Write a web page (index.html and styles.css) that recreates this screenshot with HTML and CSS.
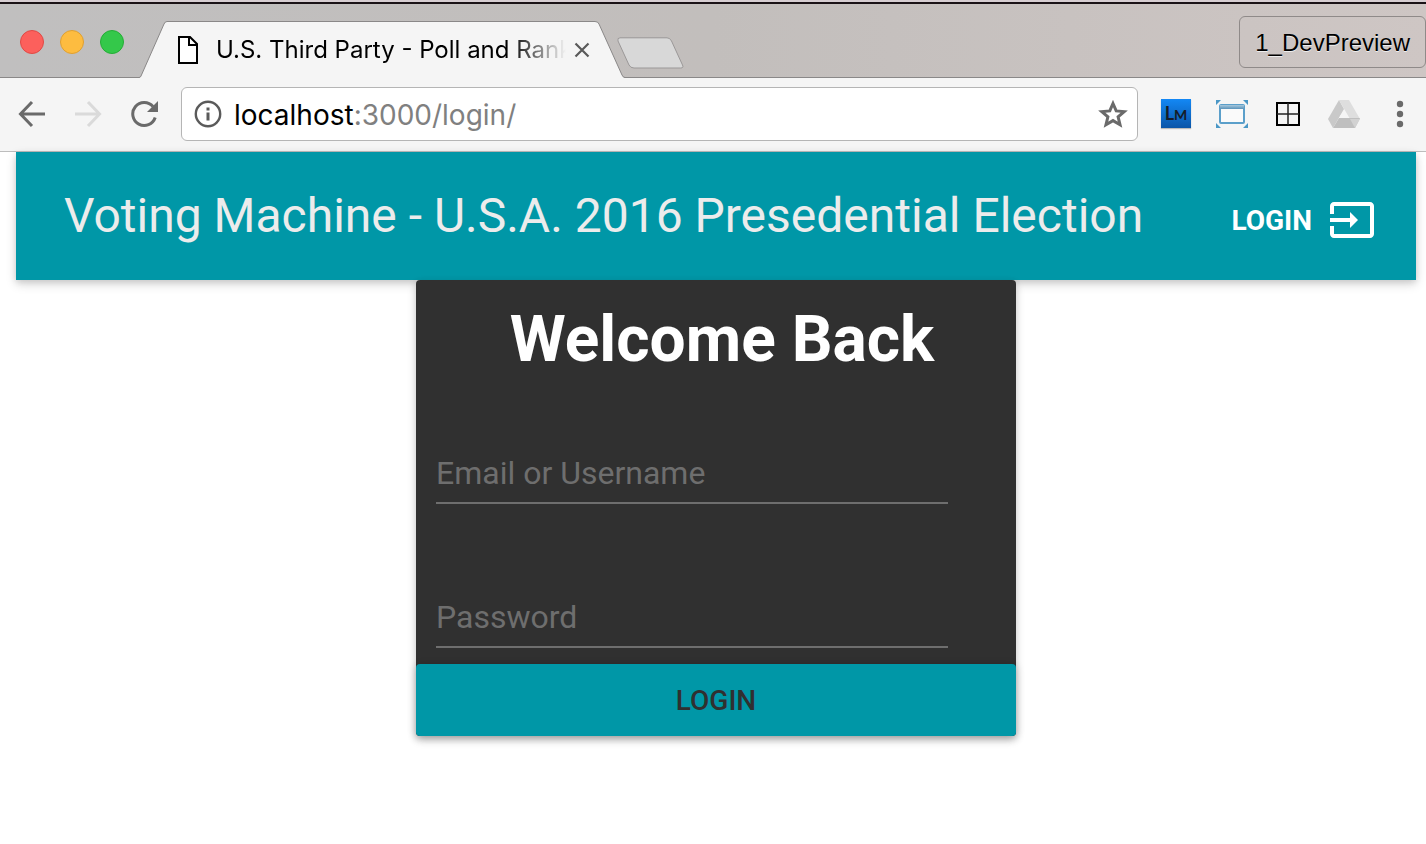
FILE: index.html
```html
<!DOCTYPE html>
<html lang="en">
<head>
<meta charset="utf-8">
<title>U.S. Third Party - Poll and Rank</title>
<link rel="stylesheet" href="styles.css">
</head>
<body>
<div class="browser">
  <div class="tab-strip">
    <div class="window-controls">
      <button class="light light-close" aria-label="Close window"></button>
      <button class="light light-min" aria-label="Minimize window"></button>
      <button class="light light-max" aria-label="Zoom window"></button>
    </div>
    <div class="tab">
      <svg class="tab-shape" width="486" height="57" viewBox="0 0 486 57" aria-hidden="true">
        <path d="M0 57 C1 56 1.500 56 2 55 L25 3 Q26 .5 28 .5 H456 Q459 .5 460 3 L483 54 Q484 56.500 486 57 Z" fill="#f5f5f5"/>
        <path d="M0 56.500 Q1.500 56.500 2 55 L25 3 Q26 .5 28 .5 H456 Q459 .5 460 3 L483 54 Q484 56.500 486 56.500" fill="none" stroke="#8a8888"/>
      </svg>
      <svg class="tab-icon" width="20" height="28" viewBox="0 0 20 28" aria-hidden="true">
        <path d="M1 1H12L19 8V27H1Z" fill="#fff" stroke="#000" stroke-width="2"/>
        <path d="M11 1V9H19" fill="none" stroke="#000" stroke-width="2"/>
      </svg>
      <span class="tab-title">U.S. Third Party - Poll and Rank</span>
      <button class="tab-close" aria-label="Close tab">
        <svg width="16" height="16" viewBox="0 0 16 16"><path d="M1.500 1.500L14.500 14.500M14.500 1.500L1.500 14.500" stroke="#5a5a5a" stroke-width="2.200"/></svg>
      </button>
    </div>
    <button class="new-tab" aria-label="New tab">
      <svg width="67" height="32" viewBox="0 0 67 32"><path d="M3 .8H50Q53 .8 54.500 4L65.500 28Q67 31 63.500 31H17Q13.500 31 12 28L1 4Q0 .8 3 .8Z" fill="#d8d8d8" stroke="#9b9898"/></svg>
    </button>
    <button class="profile">1_DevPreview</button>
  </div>

  <div class="toolbar">
    <button class="tool" aria-label="Back">
      <svg width="28" height="28" viewBox="0 0 28 28"><path d="M27 14H3M14 2L2.500 14L14 26" fill="none" stroke="#6a6a6a" stroke-width="3"/></svg>
    </button>
    <button class="tool" aria-label="Forward" disabled>
      <svg width="28" height="28" viewBox="0 0 28 28"><path d="M1 14H25M14 2L25.500 14L14 26" fill="none" stroke="#dadada" stroke-width="3"/></svg>
    </button>
    <button class="tool" aria-label="Reload">
      <svg width="28" height="28" viewBox="0 0 28 28"><path d="M25.200 17.500A11.500 11.500 0 1 1 23 6.500" fill="none" stroke="#6a6a6a" stroke-width="3"/><path d="M28 1V12H17Z" fill="#6a6a6a"/></svg>
    </button>
    <div class="address">
      <svg width="28" height="28" viewBox="0 0 28 28" aria-hidden="true"><circle cx="14" cy="14" r="12.200" fill="none" stroke="#5a5a5a" stroke-width="2.400"/><path d="M12.500 7.500H15.500V10.500H12.500ZM12.500 12.500H15.500V20.500H12.500Z" fill="#5a5a5a"/></svg>
      <div class="url"><span class="url-host">localhost</span>:3000/login/</div>
      <button class="star" aria-label="Bookmark this page">
        <svg width="30" height="28" viewBox="0 0 30 28"><path d="M15 3.500L18.200 10.900L26.200 11.600L20.100 16.900L22 24.700L15 20.600L8 24.700L9.900 16.900L3.800 11.600L11.800 10.900Z" fill="none" stroke="#6a6a6a" stroke-width="3"/></svg>
      </button>
    </div>
    <div class="extensions">
      <button class="tool" aria-label="LM extension"><span class="lm">L<span class="lm-small">M</span></span></button>
      <button class="tool" aria-label="Window resizer">
        <svg width="32" height="30" viewBox="0 0 32 30">
          <defs><linearGradient id="bar" x1="0" y1="0" x2="0" y2="1"><stop offset="0" stop-color="#a8c8dc"/><stop offset="1" stop-color="#5a93bb"/></linearGradient></defs>
          <path d="M0 1H5L0 6ZM32 1H27L32 6ZM0 29H5L0 24ZM32 29H27L32 24Z" fill="#4a97c6"/>
          <rect x="4" y="6" width="24" height="18" rx="1" fill="#fafafa" stroke="#5b9fca" stroke-width="2"/>
          <rect x="4" y="6" width="24" height="4" fill="url(#bar)"/>
        </svg>
      </button>
      <button class="tool" aria-label="Grid extension">
        <svg width="24" height="24" viewBox="0 0 24 24"><path d="M1 1H23V23H1Z" fill="none" stroke="#000" stroke-width="2"/><path d="M12 1V23M1 12H23" stroke="#222" stroke-width="1.500"/></svg>
      </button>
      <button class="tool" aria-label="Google Drive">
        <svg width="32" height="28" viewBox="0 0 32 28"><path d="M11 0L0 19L5 28L16 9Z" fill="#c9c9c9"/><path d="M11 0H21L32 19H22Z" fill="#dedede"/><path d="M11 18H32L27 28H5Z" fill="#bfbfbf"/><path d="M22 19H32L27 28Z" fill="#d2d2d2"/><path d="M16 10L21 18H11Z" fill="#f5f5f5"/></svg>
      </button>
      <button class="tool" aria-label="Menu">
        <svg width="8" height="28" viewBox="0 0 8 28"><g fill="#6a6a6a"><circle cx="4" cy="4" r="3.200"/><circle cx="4" cy="14" r="3.200"/><circle cx="4" cy="24" r="3.200"/></g></svg>
      </button>
    </div>
  </div>
</div>

<div class="page">
  <header class="app-bar">
    <h1 class="app-title">Voting Machine - U.S.A. 2016 Presedential Election</h1>
    <a class="login-link" href="#login">
      LOGIN
      <svg width="48" height="48" viewBox="0 0 24 24" aria-hidden="true"><path fill="#fff" d="M21 3.010H3c-1.100 0-2 .9-2 2V9h2V4.990h18v14.030H3V15H1v4.010c0 1.100.9 1.980 2 1.980h18c1.100 0 2-.88 2-1.980v-14c0-1.110-.9-2-2-2zM11 16l4-4-4-4v3H1v2h10v3z"/></svg>
    </a>
  </header>
  <main>
    <form class="card" id="login">
      <h2 class="card-title">Welcome Back</h2>
      <div class="field"><input class="field-input" type="text" placeholder="Email or Username" aria-label="Email or Username"></div>
      <div class="field"><input class="field-input" type="password" placeholder="Password" aria-label="Password"></div>
      <button class="submit" type="submit">LOGIN</button>
    </form>
  </main>
</div>
</body>
</html>
```
FILE: styles.css
```css
* {
  box-sizing: border-box;
}

body {
  min-height: 100vh;
  margin: 0;
  background: #fff;
  font-family: Roboto, "Liberation Sans", sans-serif;
}

button {
  margin: 0;
  padding: 0;
  border: 0;
  background: none;
  font: inherit;
}

svg {
  display: block;
}

/* Browser window */
.browser {
  border-top: 2px solid #d6cdd1;
  color: #000;
}

.tab-strip {
  display: flex;
  align-items: flex-end;
  height: 76px;
  border-top: 2px solid #1a1216;
  background: linear-gradient(90deg, #c0bfbf, #c2bebc 50%, #cec6c4);
  box-shadow: inset 0 -1px #8a8888;
}

.window-controls {
  display: flex;
  gap: 16px;
  margin: 0 0 24px 20px;
}

.light {
  width: 24px;
  height: 24px;
  border: 1px solid;
  border-radius: 50%;
}

.light-close {
  background: #fc605c;
  border-color: #e04a45;
}

.light-min {
  background: #fdbc40;
  border-color: #dfa032;
}

.light-max {
  background: #34c84a;
  border-color: #25ad36;
}

.tab {
  position: relative;
  display: flex;
  align-items: center;
  width: 486px;
  height: 57px;
  margin-left: 15px;
  padding: 0 35px 0 39px;
}

.tab-shape {
  position: absolute;
  inset: 0;
}

.tab-icon,
.tab-title,
.tab-close {
  position: relative;
}

.tab-icon {
  flex: none;
}

.tab-title {
  flex: 1;
  margin-left: 18px;
  overflow: hidden;
  white-space: nowrap;
  font-size: 24px;
  line-height: 32px;
  font-family: Inter, sans-serif;
  mask-image: linear-gradient(90deg, #000 calc(100% - 56px), transparent);
}

.tab-close {
  margin-left: 8px;
}

.new-tab {
  margin: 0 0 9px -8px;
}

.profile {
  height: 52px;
  margin: 0 0 10px auto;
  padding: 2px 15px 0;
  border: 1px solid #8f8a89;
  border-radius: 6px;
  color: #000;
  font-family: "Liberation Sans", sans-serif;
  font-size: 24px;
  text-shadow: 0 1px #eee;
}

.toolbar {
  display: flex;
  align-items: center;
  gap: 28px;
  height: 74px;
  padding: 0 10px 2px 18px;
  background: #f5f5f5;
  border-bottom: 1px solid #bdbdbd;
}

.address {
  display: flex;
  flex: 1;
  align-items: center;
  height: 54px;
  margin-left: -5px;
  padding: 0 9px 0 12px;
  border: 1px solid #b5b5b5;
  border-radius: 6px;
  background: #fff;
}

.url {
  flex: 1;
  margin-left: 12px;
  padding-top: 2px;
  color: #808080;
  font-family: Inter, sans-serif;
  font-size: 28px;
  line-height: 36px;
}

.url-host {
  color: #000;
}

.extensions {
  display: grid;
  grid-template-columns: repeat(5, 32px);
  align-items: center;
  justify-items: center;
  gap: 24px;
  margin-left: -6px;
}

.lm {
  display: block;
  width: 30px;
  height: 29px;
  background: linear-gradient(#1388f5, #0a55a8);
  box-shadow: 0 1px 1px #bbb;
  color: #151c28;
  font-family: Lato, sans-serif;
  font-size: 18px;
  font-weight: 700;
  line-height: 28px;
}

.lm-small {
  font-size: 14px;
}

/* Login page */
.page {
  padding: 0 10px 32px 16px;
}

.app-bar {
  display: flex;
  align-items: center;
  justify-content: space-between;
  min-height: 128px;
  padding: 0 40px 0 48px;
  background: #0097a7;
  box-shadow: 0 4px 10px rgba(0, 0, 0, .16), 0 2px 6px rgba(0, 0, 0, .1);
}

.app-title {
  margin: 0;
  color: #ececec;
  font-size: 48px;
  font-weight: 400;
  line-height: 64px;
}

.login-link {
  display: flex;
  align-items: center;
  gap: 16px;
  margin-top: 8px;
  color: #fff;
  font-size: 28px;
  font-weight: 700;
  text-decoration: none;
}

.card {
  width: 600px;
  max-width: 100%;
  margin: 0 auto;
  border-radius: 4px;
  background: #303030;
  box-shadow: 0 4px 10px rgba(0, 0, 0, .16), 0 2px 6px rgba(0, 0, 0, .1);
}

.card-title {
  margin: 0;
  padding: 24px 0 0 12px;
  color: #fff;
  font-size: 64px;
  font-weight: 700;
  line-height: 72px;
  text-align: center;
}

.field {
  padding: 64px 68px 16px 20px;
}

.field-input {
  display: block;
  width: 100%;
  height: 64px;
  padding: 4px 0 0;
  border: 0;
  border-bottom: 2px solid #6e6e6e;
  outline: 0;
  background: none;
  color: #fff;
  font-family: inherit;
  font-size: 32px;
}

.field-input::placeholder {
  color: #6e6e6e;
  opacity: 1;
}

.submit {
  display: block;
  width: 100%;
  height: 72px;
  border-radius: 4px;
  background: #0097a7;
  box-shadow: 0 2px 8px rgba(0, 0, 0, .24);
  color: #303030;
  font-size: 28px;
  font-weight: 500;
}
```
